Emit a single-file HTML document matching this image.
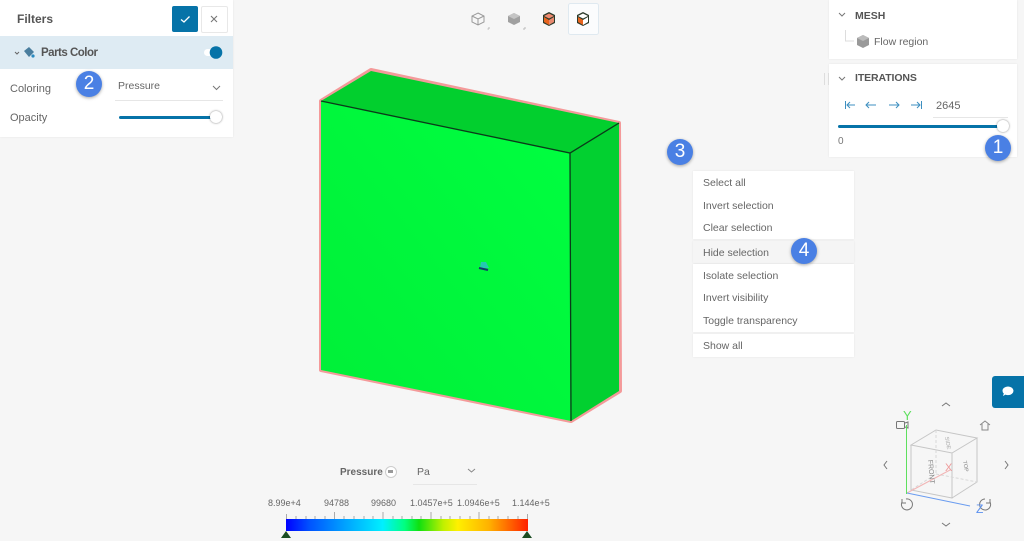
<!DOCTYPE html>
<html><head><meta charset="utf-8">
<style>
html,body{margin:0;padding:0;width:1024px;height:541px;overflow:hidden;background:#f6f6f6;font-family:"Liberation Sans",sans-serif;color:#666}
body{filter:blur(.3px)}
.a{position:absolute;white-space:nowrap}
.panel{position:absolute;background:#fff;box-shadow:0 0 2px rgba(0,0,0,.07)}
.num{position:absolute;width:26px;height:26px;border-radius:50%;background:#4a80e4;color:#fff;font-size:19px;line-height:26px;text-align:center;box-shadow:0 1px 3px rgba(0,0,0,.35)}
.m{position:absolute;left:703px;font-size:10.5px;color:#666;white-space:nowrap}
.l{position:absolute;font-size:9px;color:#666;white-space:nowrap;text-align:center}
svg{position:absolute;left:0;top:0}
</style></head><body>

<svg width="1024" height="541" viewBox="0 0 1024 541">
<defs>
<linearGradient id="f" x1="0" y1="1" x2="1" y2="0"><stop offset="0" stop-color="#00ef38"/><stop offset="1" stop-color="#00ff40"/></linearGradient>
</defs>
<polygon points="321,101 371,70 619,123 620,391 571,421 321,370" fill="#00d030" stroke="#f49a9a" stroke-width="4" stroke-linejoin="round"/>
<polygon points="321,101 371,71 619,123 570,153" fill="#02cf2e"/>
<polygon points="570,153 619,123 619,391 571,421" fill="#02d030"/>
<polygon points="321,101 570,153 571,421 321,370" fill="url(#f)"/>
<path d="M321 101L570 153L619 123M570 153L571 421" fill="none" stroke="#0b3a1a" stroke-width="1.300"/>
<polygon points="481,262 486,262 489,268 480,268" fill="#25c8b0"/>
<path d="M479 268L488 270" stroke="#123a6a" stroke-width="2"/>
</svg>

<!-- Filters panel -->
<div class="panel" style="left:0;top:0;width:233px;height:137px"></div>
<div class="a" style="left:17px;top:12px;font-size:12px;font-weight:bold;color:#555">Filters</div>
<div class="a" style="left:172px;top:6px;width:26px;height:26px;background:#0673a8;border-radius:2px"></div>
<svg style="left:172px;top:6px" width="26" height="26"><path d="M9 13.500L12 16L17.500 10.500" fill="none" stroke="#fff" stroke-width="1.300"/></svg>
<div class="a" style="left:201px;top:6px;width:25px;height:25px;background:#fff;border:1px solid #e8e8e8;border-radius:2px"></div>
<svg style="left:201px;top:6px" width="26" height="26"><path d="M10 10L16 16M16 10L10 16" stroke="#777" stroke-width="1.100"/></svg>
<div class="a" style="left:0;top:36px;width:233px;height:33px;background:#deebf3"></div>
<svg style="left:0;top:36px" width="233" height="33">
<path d="M15 16L17 18L19 16" fill="none" stroke="#666" stroke-width="1"/>
<path d="M24 15L29 11L34 16L29 21Z" fill="#4a7e9e"/><circle cx="33" cy="20" r="1.600" fill="#2a8ac0"/>
<rect x="204" y="13" width="12" height="7" rx="3.500" fill="#fff"/><circle cx="216" cy="16.500" r="6.300" fill="#0673a8"/>
</svg>
<div class="a" style="left:41px;top:47px;font-size:11.500px;font-weight:bold;color:#555;letter-spacing:-.5px">Parts Color</div>
<div class="a" style="left:10px;top:83px;font-size:11px;color:#666">Coloring</div>
<div class="a" style="left:10px;top:112px;font-size:11px;color:#666">Opacity</div>
<div class="a" style="left:118px;top:80px;font-size:10.500px;color:#666">Pressure</div>
<div class="a" style="left:115px;top:100px;width:108px;height:1px;background:#e6e6e6"></div>
<svg style="left:210px;top:83px" width="14" height="10"><path d="M3 3L6.500 6.500L10 3" fill="none" stroke="#777" stroke-width="1"/></svg>
<div class="a" style="left:119px;top:116px;width:95px;height:3px;background:#0673a8;border-radius:2px"></div>
<div class="a" style="left:210px;top:111px;width:12px;height:12px;background:#fff;border-radius:50%;box-shadow:0 0 2px rgba(0,0,0,.5)"></div>
<div class="num" style="left:76px;top:71px">2</div>

<!-- Top toolbar -->
<svg width="1024" height="40" style="left:0;top:0">
<g fill="none" stroke="#999" stroke-width="1">
<path d="M478 13L484 16V22L478 25L472 22V16ZM472 16L478 19L484 16M478 19V25"/>
</g>
<path d="M489 29H487.500M489 29V27" stroke="#bbb" fill="none"/>
<path d="M514 13L520 16V22L514 25L508 22V16Z" fill="#a0a0a0"/><path d="M508 16L514 19L520 16L514 13Z" fill="#c4c4c4"/>
<path d="M525 29H523M525 29V27" stroke="#bbb" fill="none"/>
<path d="M549 12L555 15V23L549 26L543 23V15Z" fill="#2b3a2a"/><path d="M549 13.500L554 16L549 18.500L544 16Z" fill="#f08a70"/><path d="M544 17L549 20V25L544 22Z" fill="#e8641e"/><path d="M554 17L549 20V25L554 22Z" fill="#e88a70"/>
<rect x="568.500" y="3.500" width="30" height="31" rx="2" fill="#fbfcfd" stroke="#dfe9f0"/>
<path d="M583 12L589 15V23L583 26L577 23V15Z" fill="#2b3a2a"/><path d="M583 13.500L588 16L583 18.500L578 16Z" fill="#fff"/><path d="M578 17L583 20V25L578 22Z" fill="#e8641e"/><path d="M588 17L583 20V25L588 22Z" fill="#fff"/>
</svg>

<!-- Mesh panel -->
<div class="panel" style="left:829px;top:0;width:188px;height:59px"></div>
<svg style="left:829px;top:0" width="188" height="59">
<path d="M10 13L13 16L16 13" fill="none" stroke="#777" stroke-width="1"/>
<path d="M16.500 30V41H25" fill="none" stroke="#ddd"/>
<path d="M34 35L40 38V45L34 48L28 45V38Z" fill="#999"/><path d="M34 35L40 38L34 41L28 38Z" fill="#bbb"/>
</svg>
<div class="a" style="left:855px;top:10px;font-size:10.500px;font-weight:bold;color:#555">MESH</div>
<div class="a" style="left:874px;top:36px;font-size:10.500px;color:#666">Flow region</div>

<!-- Iterations panel -->
<div class="panel" style="left:829px;top:64px;width:188px;height:93px"></div>
<svg style="left:829px;top:64px" width="188" height="93">
<path d="M10 13L13 16L16 13" fill="none" stroke="#777" stroke-width="1"/>
<g fill="none" stroke="#3d8fc0" stroke-width="1">
<path d="M16.500 37V45M26 41H18M21 38L18 41L21 44"/>
<path d="M47 41H37M40 38L37 41L40 44"/>
<path d="M60 41H70M67 38L70 41L67 44"/>
<path d="M82 41H91M88 38L91 41L88 44M92.500 37V45"/>
</g>
</svg>
<div class="a" style="left:855px;top:72px;font-size:10.500px;font-weight:bold;color:#555;letter-spacing:-.1px">ITERATIONS</div>
<div class="a" style="left:936px;top:100px;font-size:11px;color:#666">2645</div>
<div class="a" style="left:933px;top:117px;width:75px;height:1px;background:#e6e6e6"></div>
<div class="a" style="left:838px;top:125px;width:160px;height:3px;background:#0673a8;border-radius:2px"></div>
<div class="a" style="left:997px;top:120px;width:12px;height:12px;background:#fff;border-radius:50%;box-shadow:0 0 2px rgba(0,0,0,.5)"></div>
<div class="a" style="left:838px;top:136px;font-size:10px;color:#777">0</div>
<div class="a" style="left:824px;top:73px;width:3px;height:12px;border-left:1px solid #ddd;border-right:1px solid #ddd"></div>
<div class="num" style="left:985px;top:135px">1</div>

<!-- Context menu -->
<div class="num" style="left:667px;top:139px">3</div>
<div class="panel" style="left:693px;top:171px;width:161px;height:68px"></div>
<div class="panel" style="left:693px;top:241px;width:161px;height:22px;background:#f5f5f5"></div>
<div class="panel" style="left:693px;top:264px;width:161px;height:68px"></div>
<div class="panel" style="left:693px;top:334px;width:161px;height:23px"></div>
<div class="m" style="top:177px">Select all</div>
<div class="m" style="top:200px">Invert selection</div>
<div class="m" style="top:222px">Clear selection</div>
<div class="m" style="top:247px">Hide selection</div>
<div class="m" style="top:270px">Isolate selection</div>
<div class="m" style="top:292px">Invert visibility</div>
<div class="m" style="top:315px">Toggle transparency</div>
<div class="m" style="top:340px">Show all</div>
<div class="num" style="left:791px;top:238px">4</div>

<!-- Chat button -->
<div class="a" style="left:992px;top:376px;width:32px;height:32px;background:#0673a8;border-radius:3px 0 0 3px"></div>
<svg style="left:992px;top:376px" width="32" height="32"><path d="M16 10.500A5.500 4.300 0 1 1 16 19.100Q14.500 19.100 13.500 18.600L11 20L11.800 17.500Q10.500 16.500 10.500 14.800A5.500 4.300 0 0 1 16 10.500Z" fill="#fff"/></svg>

<!-- View cube -->
<svg width="1024" height="541">
<g fill="none" stroke="#777" stroke-width="1">
<path d="M942 406L946 403L950 406M942 523L946 526L950 523M887 461L884 465L887 469M1005 461L1008 465L1005 469"/>
<path d="M980 425L985 421L990 425M982 424V430H988V424" stroke="#888"/>
<rect x="896.500" y="421.500" width="8" height="7" rx="1"/><path d="M905 423L908 422V428L905 427"/>
<path d="M902 502A5.500 5.500 0 1 0 906 499M902 499V503H906" stroke="#777"/>
<path d="M990 502A5.500 5.500 0 1 1 985 499M990 499V503H986"/>
</g>
<path d="M911 445L936 430L977 438L952 453ZM911 445V490L952 498V453M952 498L977 482V438" fill="none" stroke="#c6c6c6" stroke-width="1"/>
<path d="M936 430V474L911 490M936 474L977 482" fill="none" stroke="#d8d8d8" stroke-dasharray="3 2"/>
<path d="M907 493L950 470" stroke="#f2b5b5"/>
<path d="M906.500 494V425" stroke="#5ee05e" stroke-width="1"/>
<path d="M907 493L970 506" stroke="#6a9cf0" stroke-width="1"/>
<text x="903" y="420" font-family="Liberation Sans" font-size="13" fill="#5ee05e">Y</text>
<text x="976" y="513" font-family="Liberation Sans" font-size="12" fill="#5a90f0">Z</text>
<text x="945" y="471" font-family="Liberation Sans" font-size="11" fill="#ee9a9a">X</text>
<text transform="translate(928,460) rotate(85)" font-family="Liberation Sans" font-size="7" fill="#888">FRONT</text>
<text transform="translate(963,461) rotate(80)" font-family="Liberation Sans" font-size="5.500" fill="#888">TOP</text>
<text transform="translate(945,437) rotate(80)" font-family="Liberation Sans" font-size="5.500" fill="#aaa">SIDE</text>
</svg>

<!-- Legend -->
<div class="a" style="left:340px;top:467px;font-size:10px;font-weight:bold;color:#666">Pressure</div>
<div class="a" style="left:385px;top:466px;width:10px;height:10px;border:1px solid #ccc;border-radius:50%;background:#fff"></div>
<div class="a" style="left:388px;top:470px;width:5px;height:3px;background:#999"></div>
<div class="a" style="left:417px;top:466px;font-size:10.500px;color:#666">Pa</div>
<div class="a" style="left:413px;top:484px;width:64px;height:1px;background:#e6e6e6"></div>
<svg style="left:465px;top:467px" width="14" height="10"><path d="M3 2L6.500 5L10 2" fill="none" stroke="#888"/></svg>
<div class="l" style="left:268px;top:498px">8.99e+4</div>
<div class="l" style="left:324px;top:498px">94788</div>
<div class="l" style="left:371px;top:498px">99680</div>
<div class="l" style="left:410px;top:498px">1.0457e+5</div>
<div class="l" style="left:457px;top:498px">1.0946e+5</div>
<div class="l" style="left:512px;top:498px">1.144e+5</div>
<svg width="1024" height="541">
<path d="M286.500 514V519M334.500 512V519M383 512V519M431 512V519M479 512V519M527.500 514V519M296 516V519M306 516V519M315 516V519M325 516V519M344 516V519M354 516V519M364 516V519M373 516V519M393 516V519M402 516V519M412 516V519M421 516V519M441 516V519M450 516V519M460 516V519M470 516V519M489 516V519M498 516V519M508 516V519M518 516V519" stroke="#aaa" stroke-width="1"/>
<polygon points="281,538 286,531 291,538" fill="#1b4d23"/>
<polygon points="522,538 527,531 532,538" fill="#1b4d23"/>
</svg>
<div class="a" style="left:286px;top:519px;width:242px;height:12px;background:linear-gradient(90deg,#0000ff 0%,#0055ff 10%,#00a0ff 24%,#00f0ff 40%,#00ff80 49%,#10e010 55%,#c0f000 65%,#fff000 71%,#ffb000 84%,#ff2000 100%)"></div>
</body></html>
